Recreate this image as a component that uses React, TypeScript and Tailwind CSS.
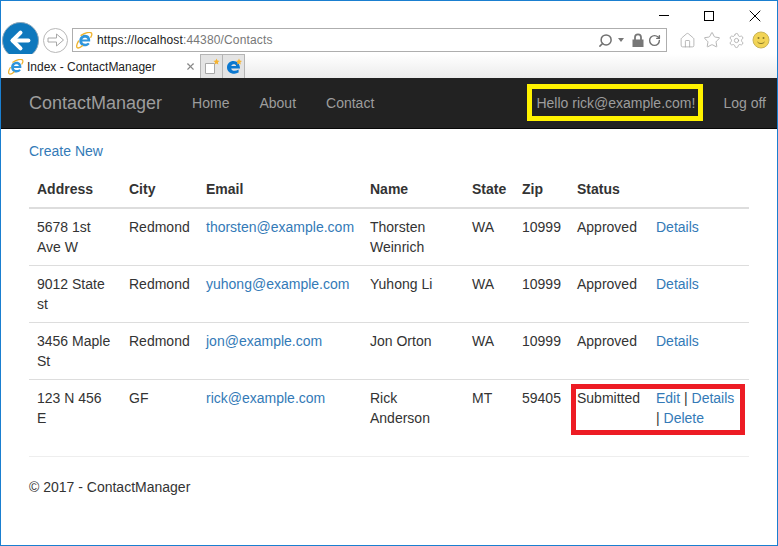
import { ArrowLeft, Home, Star, Settings, Search, RotateCw, X } from 'lucide-react';

const ROWS = [
  { address: '5678 1st Ave W', city: 'Redmond', email: 'thorsten@example.com', name: 'Thorsten Weinrich', state: 'WA', zip: '10999', status: 'Approved' },
  { address: '9012 State st', city: 'Redmond', email: 'yuhong@example.com', name: 'Yuhong Li', state: 'WA', zip: '10999', status: 'Approved' },
  { address: '3456 Maple St', city: 'Redmond', email: 'jon@example.com', name: 'Jon Orton', state: 'WA', zip: '10999', status: 'Approved' },
  { address: '123 N 456 E', city: 'GF', email: 'rick@example.com', name: 'Rick Anderson', state: 'MT', zip: '59405', status: 'Submitted' },
];

const COLS = ['Address', 'City', 'Email', 'Name', 'State', 'Zip', 'Status', ''];
const WIDTHS = ['w-[92px]', 'w-[77px]', 'w-[164px]', 'w-[102px]', 'w-[50px]', 'w-[55px]', 'w-[79px]', 'w-[101px]'];

function IeLogo({ size = 18 }: { size?: number }) {
  return (
    <svg width={size} height={size} viewBox="0 0 18 18" fill="none">
      <path d="M15 10H6.6c.3 2.4 3.6 3.2 6.2 1.4l1.7 1.3c-1.4 1.7-3.3 2.5-5.1 2.5-3.4 0-5.9-2.6-5.9-6 0-3.6 2.8-6.2 6.1-6.2 3.6 0 6 2.9 5.4 7zM6.7 7.9h5.5c-.3-2.5-4.9-2.6-5.5 0z" fill="#2f95dc" />
      <path d="M2.6 9.6C.4 13.4.2 16.2 1.6 16.8c1.4.5 3.4-.6 5.2-2.2M5.4 3.6C9.6.8 15-.6 16.4 1.2c.7 1 .2 2.8-.8 4.4" stroke="#eeb22c" strokeWidth="1.4" strokeLinecap="round" />
    </svg>
  );
}

function EdgeStarIcon() {
  return (
    <svg width="18" height="18" viewBox="0 0 18 18" fill="none">
      <path d="M15 10.4H6.2c.3 2.6 3.9 3.3 7.4 1.2v3c-1.4.8-2.8 1.1-4.2 1.1C5 15.7 2 13 2 9.4 2 5.600 5 3 8.500 3c3.800 0 6.500 3 6.500 7.400zM6.300 7.900h4.800c-.1-2.300-4.400-2.300-4.800 0z" fill="#0b78d0" />
      <path d="M14 .5l.9 2 2.100.4-1.600 1.400.4 2.200-1.800-1.100-1.900 1.100.5-2.200L11 2.900l2.100-.4z" fill="#f5b331" />
    </svg>
  );
}

function NewTabIcon() {
  return (
    <svg width="18" height="18" viewBox="0 0 18 18" fill="none">
      <path d="M2.500 5.500h9v10h-9z" fill="#fff" stroke="#a8a8a8" />
      <path d="M13.500 .5l.9 2 2.100.4-1.600 1.400.4 2.200-1.800-1.100-1.900 1.100.5-2.200-1.600-1.400 2.100-.4z" fill="#f5b331" />
    </svg>
  );
}

function ForwardArrow() {
  return (
    <svg width="18" height="16" viewBox="0 0 18 16" fill="none">
      <path d="M1 6h8.500V2L16.500 8l-7 6v-4H1z" stroke="#a8a8a8" strokeWidth="1" strokeLinejoin="round" />
    </svg>
  );
}

function LockIcon() {
  return (
    <svg width="12" height="14" viewBox="0 0 12 14" fill="none">
      <path d="M3 7V4.300a3 3 0 0 1 6 0V7" stroke="#777" strokeWidth="1.800" />
      <rect x="0.500" y="6.500" width="11" height="7.500" fill="#777" />
    </svg>
  );
}

function Smiley() {
  return (
    <svg width="18" height="18" viewBox="0 0 18 18">
      <circle cx="9" cy="9" r="8" fill="#f2d455" stroke="#c9b45a" />
      <circle cx="6.500" cy="7" r="1" fill="#8a7a2a" />
      <circle cx="11.500" cy="7" r="1" fill="#8a7a2a" />
      <path d="M5.500 11c1.600 2 5.400 2 7 0" stroke="#8a7a2a" fill="none" />
    </svg>
  );
}

export default function App() {
  return (
    <div className="relative h-[546px] w-[778px] overflow-hidden border border-[#1a7fd0] bg-white font-['Liberation_Sans',Arial,sans-serif] text-sm leading-5 text-[#333]">
      {/* Window buttons */}
      <div className="flex h-[25px] items-center justify-end pr-[12px] pt-[4px] text-black">
        <div className="mr-[35px] h-[1px] w-[10px] bg-black" />
        <div className="mr-[31px] h-[10px] w-[10px] border border-black" />
        <X size={20} strokeWidth={1.2} />
      </div>

      {/* Address row */}
      <div className="flex h-[28px] items-center pl-[1px]">
        <div className="flex h-[37px] w-[37px] shrink-0 items-center justify-center rounded-full border border-[#8fa9bb] bg-[#0e78bd]">
          <ArrowLeft size={27} strokeWidth={3.6} className="text-white" />
        </div>
        <div className="ml-[4px] flex h-[25px] w-[25px] shrink-0 items-center justify-center rounded-full border border-[#b8b8b8]">
          <ForwardArrow />
        </div>
        <div className="ml-[4px] flex h-[24px] w-[595px] shrink-0 items-center border border-[#aeaeae] pl-[3px] pr-[5px] text-[12px] text-[#222]">
          <IeLogo size={17} />
          <span className="ml-[4px] tracking-[0.15px]">
            https://localhost<span className="text-[#777]">:44380/Contacts</span>
          </span>
          <div className="ml-auto flex items-center text-[#707070]">
            <Search size={15} strokeWidth={2.4} className="-scale-x-100" />
            <div className="ml-[5px] mr-[8px] h-0 w-0 border-x-[3.5px] border-t-[4px] border-x-transparent border-t-[#777]" />
            <LockIcon />
            <RotateCw size={13} strokeWidth={2.6} className="ml-[4px]" />
          </div>
        </div>
        <div className="ml-[12px] flex items-center gap-[7px] text-[#a5a5a5]">
          <Home size={17} strokeWidth={1.1} />
          <Star size={18} strokeWidth={1.1} />
          <Settings size={17} strokeWidth={1.1} />
          <Smiley />
        </div>
      </div>

      {/* Tab row */}
      <div className="flex h-[24px] items-end bg-gradient-to-b from-white to-[#ececec] pl-[1px] pt-[1px]">
        <div className="flex h-[24px] w-[199px] items-center border-r border-[#b5b5b5] bg-white pl-[6px] pr-[4px] pt-[1px] text-[12px] text-[#222]">
          <IeLogo size={16} />
          <span className="ml-[3px]">Index - ContactManager</span>
          <X size={11} strokeWidth={2.5} className="ml-auto text-[#888]" />
        </div>
        <div className="flex h-[24px] w-[22px] items-center justify-center border-r border-t border-[#b5b5b5] bg-[#e4e4e4]">
          <NewTabIcon />
        </div>
        <div className="flex h-[24px] w-[22px] items-center justify-center border-r border-t border-[#b5b5b5] bg-[#e4e4e4]">
          <EdgeStarIcon />
        </div>
      </div>

      {/* Navbar */}
      <nav className="flex h-[51px] items-center border-b border-[#080808] bg-[#222] pl-[28px] text-[#9d9d9d]">
        <span className="text-[18px]">ContactManager</span>
        <span className="ml-[30px]">Home</span>
        <span className="ml-[30px]">About</span>
        <span className="ml-[30px]">Contact</span>
        <span className="mb-[1px] ml-auto flex h-[37px] w-[176px] items-center border-[5px] border-[#fff200] pl-[4px]">Hello rick@example.com!</span>
        <span className="ml-[20px] mr-[11px]">Log off</span>
      </nav>

      {/* Body */}
      <main className="px-[28px]">
        <a className="mt-[12px] block text-[#337ab7]">Create New</a>
        <table className="mt-[10px] w-[720px] table-fixed border-collapse">
          <thead>
            <tr className="h-[37px] border-b-2 border-[#ddd]">
              {COLS.map((col, i) => (
                <th key={i} className={`${WIDTHS[i]} px-2 text-left font-bold`}>{col}</th>
              ))}
            </tr>
          </thead>
          <tbody>
            {ROWS.map((row, i) => (
              <tr key={row.email} className={i === 0 ? 'h-[57px]' : 'h-[57px] border-t border-[#ddd]'}>
                <td className="p-2 align-top">{row.address}</td>
                <td className="p-2 align-top">{row.city}</td>
                <td className="p-2 align-top text-[#337ab7]">{row.email}</td>
                <td className="p-2 align-top">{row.name}</td>
                <td className="p-2 align-top">{row.state}</td>
                <td className="p-2 align-top">{row.zip}</td>
                <td className="p-2 align-top">{row.status}</td>
                <td className="p-2 align-top">
                  {row.status === 'Approved' ? (
                    <a className="text-[#337ab7]">Details</a>
                  ) : (
                    <>
                      <a className="text-[#337ab7]">Edit</a> | <a className="text-[#337ab7]">Details</a> | <a className="text-[#337ab7]">Delete</a>
                    </>
                  )}
                </td>
              </tr>
            ))}
          </tbody>
        </table>
        <hr className="mt-[19px] w-[720px] border-t border-[#eee]" />
        <p className="mt-[20px]">© 2017 - ContactManager</p>
      </main>

      {/* Red callout over the last row */}
      <div className="absolute left-[570px] top-[383px] h-[51px] w-[174px] border-[5px] border-[#ed1c24]" />
    </div>
  );
}
